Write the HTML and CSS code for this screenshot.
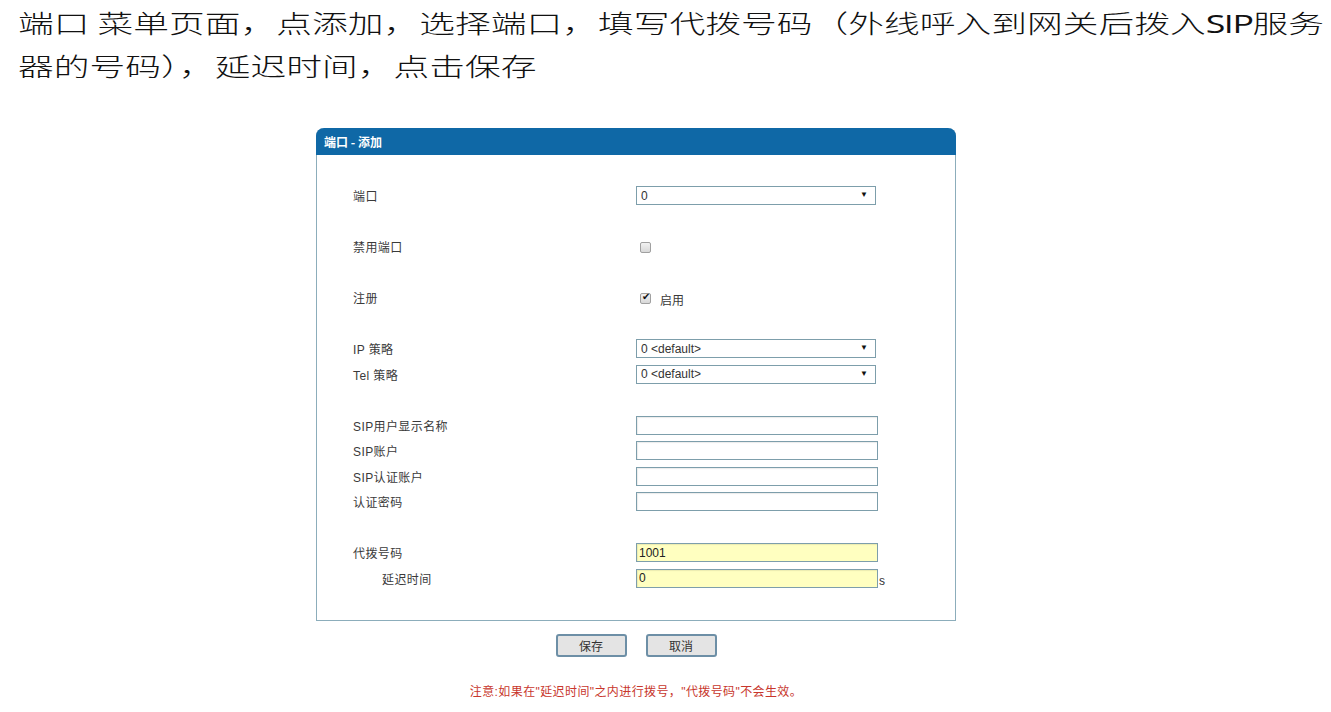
FILE: index.html
```html
<!DOCTYPE html>
<html lang="zh-CN">
<head>
  <meta charset="UTF-8" />
  <title>端口 - 添加</title>
  <link rel="stylesheet" href="styles.css">
</head>
<body>
  <div class="intro">
    <p class="intro-line">端口 菜单页面，点添加，选择端口，填写代拨号码（外线呼入到网关后拨入<span class="latin">SIP</span>服务</p>
    <p class="intro-line">器的号码），延迟时间，点击保存</p>
  </div>

  <div class="wrap">
    <div class="panel">
      <div class="panel-head">端口 - 添加</div>
      <div class="panel-body">
        <div class="row">
          <label class="lbl">端口</label>
          <div class="sel-box">
            <select class="sel"><option>0</option></select>
          </div>
        </div>

        <div class="row group">
          <label class="lbl">禁用端口</label>
          <div><input type="checkbox" class="chk"></div>
        </div>

        <div class="row group">
          <label class="lbl">注册</label>
          <div class="chk-line"><input type="checkbox" class="chk" checked><span>启用</span></div>
        </div>

        <div class="row group">
          <label class="lbl">IP 策略</label>
          <div class="sel-box">
            <select class="sel"><option>0 &lt;default&gt;</option></select>
          </div>
        </div>
        <div class="row">
          <label class="lbl">Tel 策略</label>
          <div class="sel-box">
            <select class="sel"><option>0 &lt;default&gt;</option></select>
          </div>
        </div>

        <div class="row group">
          <label class="lbl">SIP用户显示名称</label>
          <div><input type="text" class="txt"></div>
        </div>
        <div class="row">
          <label class="lbl">SIP账户</label>
          <div><input type="text" class="txt"></div>
        </div>
        <div class="row">
          <label class="lbl">SIP认证账户</label>
          <div><input type="text" class="txt"></div>
        </div>
        <div class="row">
          <label class="lbl">认证密码</label>
          <div><input type="password" class="txt"></div>
        </div>

        <div class="row group">
          <label class="lbl">代拨号码</label>
          <div><input type="text" class="txt hl" value="1001"></div>
        </div>
        <div class="row">
          <label class="lbl sub">延迟时间</label>
          <div class="unit-line"><input type="text" class="txt hl" value="0"><span>s</span></div>
        </div>
      </div>
    </div>

    <div class="actions">
      <button class="btn">保存</button>
      <button class="btn">取消</button>
    </div>

    <p class="note">注意:如果在"延迟时间"之内进行拨号，"代拨号码"不会生效。</p>
  </div>
</body>
</html>
```

FILE: styles.css
```css
html, body {
  margin: 0;
  padding: 0;
  background: #fff;
  overflow: hidden;
}
body {
  font-family: "Liberation Sans", Arial, "Noto Sans CJK SC", sans-serif;
  color: #333;
}
.intro {
  padding: 1px 0 0 18px;
  height: 128px;
  box-sizing: border-box;
}
.intro-line {
  margin: 0;
  width: max-content;
  font-family: "Noto Sans CJK SC", sans-serif;
  font-weight: 300;
  font-size: 25px;
  line-height: 42px;
  color: #111;
  white-space: nowrap;
  transform: scaleX(1.43);
  transform-origin: 0 0;
}
.intro-line .latin {
  font-family: "Open Sans", "Noto Sans", sans-serif;
  font-weight: 400;
  letter-spacing: -1px;
}
.wrap {
  margin-left: 316px;
  width: 640px;
}
.panel {
  border: 1px solid #8cadbb;
  border-top: none;
  border-radius: 8px 8px 0 0;
}
.panel-head {
  height: 27px;
  line-height: 27px;
  margin: 0 -1px;
  padding-left: 8px;
  background: #0f68a6;
  border-radius: 8px 8px 0 0;
  color: #fff;
  font-weight: bold;
  font-size: 12px;
  font-family: "Noto Sans CJK SC", sans-serif;
}
.panel-body {
  padding: 28px 0 29px;
}
.row {
  display: grid;
  grid-template-columns: 319px 1fr;
  align-items: center;
  height: 25.5px;
}
.row.group {
  margin-top: 25.5px;
}
.lbl {
  padding-left: 36px;
  font-size: 12px;
  color: #3a3a3a;
  letter-spacing: 0.4px;
}
.lbl.sub {
  padding-left: 65px;
}
.sel-box {
  position: relative;
  width: 240px;
}
.sel {
  appearance: none;
  display: block;
  width: 240px;
  height: 19px;
  margin: 0;
  padding: 0 0 0 4px;
  border: 1px solid #7d9eab;
  border-radius: 0;
  background: #fff;
  font-family: "Liberation Sans", Arial, sans-serif;
  font-size: 12px;
  color: #333;
}
.sel-box::after {
  content: "▼";
  position: absolute;
  right: 8px;
  top: 4px;
  font-size: 8px;
  line-height: 10px;
  color: #111;
  pointer-events: none;
}
.chk {
  appearance: none;
  width: 11px;
  height: 11px;
  margin: 0 0 0 4px;
  border: 1px solid #a0a0a0;
  border-radius: 2px;
  background: linear-gradient(#f2f2f2, #d8d8d8);
  vertical-align: middle;
  position: relative;
}
.chk:checked::after {
  content: "✔";
  position: absolute;
  left: 1px;
  top: -3px;
  font-size: 10px;
  color: #111;
}
.chk-line span {
  margin-left: 9px;
  font-size: 12px;
  color: #3a3a3a;
  vertical-align: middle;
  position: relative;
  top: 1px;
}
.txt {
  display: block;
  box-sizing: border-box;
  width: 242px;
  height: 19px;
  margin: 0;
  padding: 0 2px;
  border: 1px solid #7d9eab;
  box-shadow: inset 1px 1px 1px rgba(0, 0, 0, 0.08);
  background: #fff;
  font-family: "Liberation Sans", Arial, sans-serif;
  font-size: 12px;
  color: #222;
}
.txt.hl {
  background: #ffffc0;
}
.unit-line {
  display: flex;
  align-items: flex-end;
}
.unit-line span {
  font-size: 12px;
  color: #333;
  margin-left: 1px;
}
.actions {
  display: flex;
  justify-content: center;
  gap: 19px;
  margin-top: 13px;
}
.btn {
  width: 71px;
  height: 23px;
  padding: 0;
  border: 2px solid #6d8fa6;
  border-radius: 3px;
  background: #e4e4e4;
  font-family: "Noto Sans CJK SC", sans-serif;
  font-size: 12px;
  color: #333;
  cursor: pointer;
}
.note {
  margin: 27px 0 0;
  text-align: center;
  font-size: 12px;
  line-height: 16px;
  color: #c8372d;
  letter-spacing: 0.4px;
}
```
